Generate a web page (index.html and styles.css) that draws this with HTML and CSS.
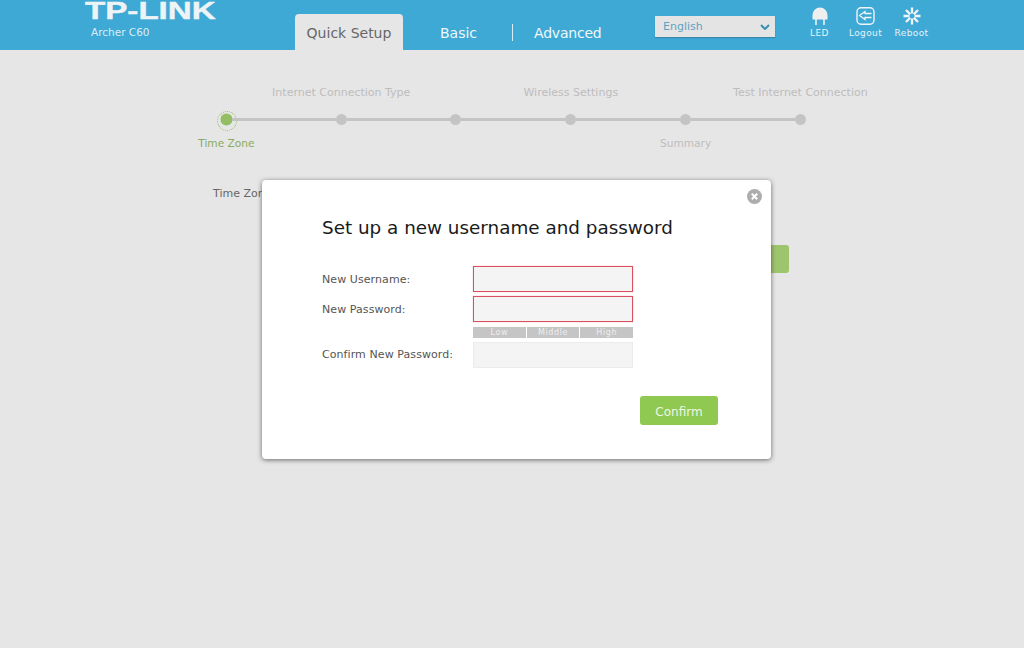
FILE: index.html
```html
<!DOCTYPE html>
<html lang="en">
<head>
<meta charset="utf-8">
<title>TP-LINK Archer C60</title>
<link rel="stylesheet" href="styles.css">
</head>
<body>
<header class="topbar">
  <div class="brand">
    <div class="logo">TP-LINK</div>
    <div class="model">Archer C60</div>
  </div>
  <nav class="tabs">
    <a class="tab tab-active">Quick Setup</a>
    <a class="tab tab-basic">Basic</a>
    <a class="tab tab-advanced">Advanced</a>
  </nav>
  <div class="lang">
    <span>English</span>
    <svg class="lang-arrow" width="10" height="6" viewBox="0 0 10 6"><path d="M1 1l4 4 4-4" fill="none" stroke="#3a8fb5" stroke-width="2"/></svg>
  </div>
  <div class="tools">
    <div class="tool">
      <svg width="18" height="18" viewBox="0 0 18 18"><path d="M1.500 12.500V8a7.500 7.500 0 0 1 15 0v4.500z" fill="#f0eff0"/><path d="M5 12v6M13 12v6" stroke="#f0f6f8" stroke-width="1.500"/></svg>
      <span>LED</span>
    </div>
    <div class="tool">
      <svg width="19" height="18" viewBox="0 0 19 18"><rect x="1" y="0.800" width="17" height="16.400" rx="4" fill="none" stroke="#f0f6f8" stroke-width="1.400"/><path d="M15.500 6.500H9V4.500L3.500 8.500 9 12.500v-2h6.500" fill="none" stroke="#f0f6f8" stroke-width="1.300"/></svg>
      <span>Logout</span>
    </div>
    <div class="tool">
      <svg width="18" height="18" viewBox="0 0 18 18"><path d="M9 0.500v6M9 11.500v6M0.500 9h6M11.500 9h6M3 3l4.200 4.200M10.800 10.800L15 15M3 15l4.200-4.200M10.800 7.200L15 3" stroke="#f0f6f8" stroke-width="2.300"/></svg>
      <span>Reboot</span>
    </div>
  </div>
</header>

<main class="page">
  <ol class="steps">
    <li class="step step-current"><span class="step-top"></span><span class="dot"></span><span class="step-bottom">Time Zone</span></li>
    <li class="step"><span class="step-top">Internet Connection Type</span><span class="dot"></span><span class="step-bottom"></span></li>
    <li class="step"><span class="step-top"></span><span class="dot"></span><span class="step-bottom"></span></li>
    <li class="step"><span class="step-top">Wireless Settings</span><span class="dot"></span><span class="step-bottom"></span></li>
    <li class="step"><span class="step-top"></span><span class="dot"></span><span class="step-bottom">Summary</span></li>
    <li class="step step-last"><span class="step-top">Test Internet Connection</span><span class="dot"></span><span class="step-bottom"></span></li>
  </ol>
  <div class="zone-row">Time Zone:</div>
  <div class="next-row"><button class="next" type="button"></button></div>
</main>

<section class="modal">
  <button class="close" type="button" aria-label="Close">
    <svg width="15" height="15" viewBox="0 0 15 15"><circle cx="7.500" cy="7.500" r="7.500" fill="#adadad"/><path d="M4.800 4.800l5.400 5.400M10.200 4.800l-5.400 5.400" stroke="#fff" stroke-width="2"/></svg>
  </button>
  <h1 class="modal-title">Set up a new username and password</h1>
  <div class="form">
    <label class="field-label">New Username:</label>
    <div class="input input-error"></div>
    <label class="field-label">New Password:</label>
    <div class="input input-error"></div>
    <div class="strength-gap"></div>
    <div class="strength"><span>Low</span><span>Middle</span><span>High</span></div>
    <label class="field-label field-label-confirm">Confirm New Password:</label>
    <div class="input"></div>
  </div>
  <div class="modal-actions"><button class="confirm" type="button">Confirm</button></div>
</section>
</body>
</html>
```

FILE: styles.css
```css
* { box-sizing: border-box; }
html, body { margin: 0; padding: 0; }
body {
  width: 1024px;
  height: 648px;
  overflow: hidden;
  background: #e6e6e6;
  font-family: "DejaVu Sans", Verdana, sans-serif;
  color: #555;
}
.topbar {
  height: 50px;
  background: #3ea9d5;
  display: flex;
  color: #fff;
}
.brand { width: 210px; margin-left: 85px; flex: none; }
.logo {
  font-family: "Liberation Sans", Arial, sans-serif;
  font-weight: bold;
  font-size: 23.500px;
  line-height: 22px;
  color: #eef4f6;
  -webkit-text-stroke: 0.4px #eef4f6;
  transform: scaleX(1.41);
  transform-origin: left top;
  white-space: nowrap;
}
.model { font-size: 10.500px; line-height: 14px; margin: 3px 0 0 6px; color: #d8edf6; }
.tabs { display: flex; align-items: flex-end; width: 360px; flex: none; }
.tab { font-size: 14px; line-height: 39px; height: 36px; color: #eef7fb; }
.tab-active {
  width: 108px;
  text-align: center;
  background: #e6e6e6;
  color: #666;
  border-radius: 4px 4px 0 0;
}
.tab-basic { margin-left: 37px; width: 73px; }
.tab-advanced { position: relative; padding-left: 22px; letter-spacing: -0.2px; margin-left: -1px; }
.tab-advanced::before {
  content: "";
  position: absolute;
  left: 0;
  top: 10px;
  height: 17px;
  width: 1px;
  background: #d8edf6;
}
.lang {
  width: 120px;
  height: 21px;
  margin-top: 16px;
  background: #e4e4e4;
  flex: none;
  display: flex;
  align-items: center;
  justify-content: space-between;
  padding: 0 5px 0 8px;
  font-size: 11px;
  color: #5fa3c4;
  box-shadow: 0 1px 1px #3688ab;
}
.tools { display: flex; margin-left: 21.500px; }
.tool {
  width: 46px;
  display: flex;
  flex-direction: column;
  align-items: center;
  padding-top: 7px;
  font-size: 9px;
  line-height: 11px;
  color: #e6f3f9;
  letter-spacing: 0.4px;
}
.tool svg { margin-bottom: 3px; }

.page { padding: 0; }
.steps {
  list-style: none;
  margin: 33px 0 0 169px;
  padding: 0;
  display: grid;
  grid-template-columns: repeat(6, 114.800px);
  width: 689px;
}
.step {
  position: relative;
  display: flex;
  flex-direction: column;
  align-items: center;
  font-size: 11px;
  color: #bdbdbd;
  white-space: nowrap;
}
.step-top { height: 20px; line-height: 20px; }
.dot {
  position: relative;
  width: 11px;
  height: 11px;
  margin: 11px 0 8px;
  border-radius: 50%;
  background: #c4c4c4;
}
.dot::after {
  content: "";
  position: absolute;
  left: 11px;
  top: 4px;
  width: 104px;
  height: 3px;
  background: #c4c4c4;
}
.step-last .dot::after { display: none; }
.step-bottom { height: 20px; line-height: 20px; font-size: 10.600px; }
.step-current { color: #86ac62; }
.step-current .dot { background: #93bf62; box-shadow: 0 0 0 0.5px #93bf62; }
.step-current .dot::before {
  content: "";
  position: absolute;
  left: -3.500px;
  top: -3.500px;
  width: 18px;
  height: 18px;
  border-radius: 50%;
  border: 1.500px dotted #93bf62;
}
.zone-row {
  margin: 31px 0 0 213px;
  font-size: 11px;
  line-height: 20px;
  color: #666;
}
.next-row { padding-left: 640px; margin-top: 41px; }
.next {
  display: block;
  width: 149px;
  height: 28px;
  border: 0;
  border-radius: 3px;
  background: #9fc46e;
}
.modal {
  position: absolute;
  left: 262px;
  top: 180px;
  width: 509px;
  height: 279px;
  background: #fff;
  border-radius: 4px;
  box-shadow: 0 1px 5px rgba(0, 0, 0, 0.55);
  padding: 0 53px 0 60px;
}
.close {
  position: absolute;
  right: 9px;
  top: 9px;
  width: 15px;
  height: 15px;
  border: 0;
  padding: 0;
  background: none;
  display: block;
}
.close svg { display: block; }
.modal-title {
  margin: 36px 0 0;
  font-size: 18.350px;
  line-height: 24px;
  font-weight: normal;
  color: #1a1a1a;
  white-space: nowrap;
}
.form {
  margin-top: 26px;
  display: grid;
  grid-template-columns: 151px 160px;
  row-gap: 4px;
  align-items: center;
}
.field-label { font-size: 11px; color: #555; white-space: nowrap; letter-spacing: 0.08px; }
.field-label-confirm { margin-bottom: 2px; }
.input { height: 26px; background: #f4f4f4; border: 1px solid #ececec; }
.input-error { border: 1px solid #d9505f; box-shadow: 0 0 1px #f0a0a8; }
.strength-gap { height: 11px; }
.strength { display: flex; height: 11px; gap: 1px; margin-top: 1px; }
.strength span {
  flex: 1;
  background: #c5c5c5;
  color: #eee;
  font-size: 8px;
  line-height: 11px;
  text-align: center;
  letter-spacing: 0.6px;
}
.modal-actions { display: flex; justify-content: flex-end; margin-top: 28px; }
.confirm {
  width: 78px;
  height: 29px;
  border: 0;
  border-radius: 3px;
  background: #8fc951;
  color: #eef7e4;
  font-family: "DejaVu Sans", sans-serif;
  font-size: 12px;
  padding: 2px 0 0;
}
```
